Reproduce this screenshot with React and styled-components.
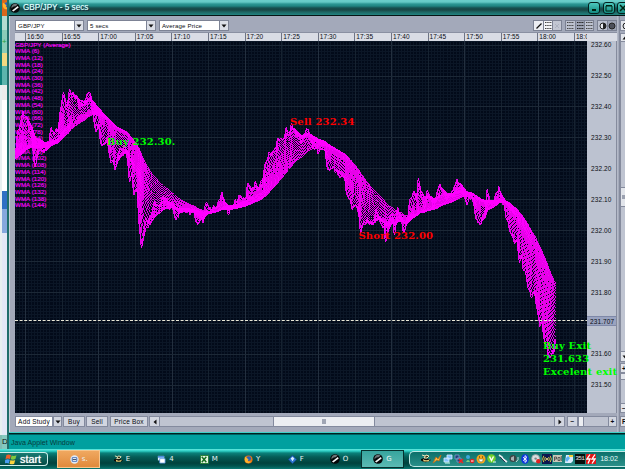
import React from 'react'
import styled, { createGlobalStyle } from 'styled-components'

const GlobalStyle = createGlobalStyle`
    *{
        box-sizing: border-box;
    }
    body{
        margin: 0;
        overflow: hidden;
        font-family: "Liberation Sans", Arial, sans-serif;
        font-size: 6.5px;
        color: #0a0c12;
    }
`

/* ---------- chart data ---------- */

const CHART_W = 572
const CHART_H = 372
const BAR = 0.611

// [x, y] of the traded price on the chart canvas
const PRICE = [
    [-90, 120], [-60, 112], [-30, 124], [-12, 116], [0, 112], [2, 92], [5, 82], [8, 68], [10, 80], [12, 76], [14, 94],
    [17, 98], [19, 132], [20, 126], [22, 108], [24, 98], [27, 114], [30, 108], [33, 102], [35, 87], [38, 92], [41, 90],
    [43, 86], [45, 70], [48, 48], [50, 66], [52, 67], [54, 47], [56, 53], [59, 55], [61, 57], [64, 67], [67, 64],
    [70, 60], [73, 48], [76, 62], [78, 77], [80, 92], [83, 83], [85, 100], [87, 107], [91, 97], [94, 112], [96, 127],
    [98, 114], [100, 137], [101, 120], [103, 110], [107, 107], [110, 105], [112, 118], [114, 145], [116, 128],
    [118, 155], [121, 145], [123, 172], [125, 200], [126, 213], [128, 192], [130, 177], [133, 182], [137, 168],
    [140, 160], [143, 168], [146, 158], [150, 156], [153, 167], [157, 163], [160, 182], [163, 170], [167, 168],
    [171, 170], [175, 172], [179, 170], [181, 186], [185, 176], [188, 180], [191, 158], [194, 171], [198, 167],
    [202, 165], [206, 151], [210, 169], [213, 172], [217, 163], [221, 160], [225, 154], [229, 161], [233, 141],
    [236, 151], [240, 140], [242, 151], [245, 143], [247, 138], [250, 122], [253, 114], [258, 111], [261, 103],
    [264, 96], [267, 100], [271, 88], [274, 94], [276, 82], [279, 90], [282, 96], [285, 102], [288, 96], [291, 86],
    [294, 94], [297, 106], [300, 108], [303, 111], [307, 106], [310, 113], [313, 133], [315, 126], [319, 128],
    [323, 134], [326, 136], [329, 134], [331, 156], [333, 153], [335, 164], [338, 167], [341, 163], [343, 173],
    [345, 191], [348, 181], [353, 180], [357, 186], [361, 168], [365, 184], [368, 184], [370, 202], [373, 184],
    [376, 168], [379, 196], [382, 164], [385, 178], [389, 193], [392, 174], [395, 158], [398, 150], [401, 158],
    [403, 136], [406, 158], [409, 168], [412, 148], [416, 163], [419, 165], [423, 144], [426, 147], [429, 153],
    [432, 159], [435, 150], [437, 153], [440, 140], [445, 143], [448, 153], [451, 164], [455, 153], [457, 156],
    [459, 170], [463, 184], [466, 180], [470, 169], [472, 146], [475, 167], [479, 158], [483, 145], [486, 159],
    [489, 167], [492, 181], [495, 191], [498, 199], [502, 202], [504, 224], [506, 213], [508, 229], [511, 234],
    [513, 249], [517, 255], [519, 249], [521, 264], [524, 284], [526, 280], [529, 300], [532, 310], [535, 319],
    [538, 305], [541, 298],
]

const PERIODS = Array.from({ length: 24 }, (_, i) => (i + 1) * 6)

const sampleBars = () => {
    const bars = []
    let k = 0
    for (let x = PRICE[0][0]; x <= 541; x += BAR) {
        while (k < PRICE.length - 2 && PRICE[k + 1][0] < x) k++
        const [x0, y0] = PRICE[k]
        const [x1, y1] = PRICE[k + 1]
        const i = bars.length
        const wiggle = Math.sin(i * 2.3) * 2.6 + Math.sin(i * 0.9 + 1) * 2.6 + Math.sin(i * 1.37) * 1.6
        bars.push({ x, y: y0 + ((y1 - y0) * (x - x0)) / (x1 - x0) + wiggle })
    }
    return bars
}

const wmaPath = (bars, period) => {
    let d = ''
    bars.forEach((bar, i) => {
        if (bar.x < 0 || i < period) return
        let sum = 0
        let weight = 0
        for (let j = 0; j < period; j++) {
            sum += bars[i - j].y * (period - j)
            weight += period - j
        }
        d += `${d ? 'L' : 'M'}${bar.x.toFixed(1)} ${(sum / weight).toFixed(1)}`
    })
    return d
}

const BARS = sampleBars()
const RIBBON = [3, ...PERIODS].map((p) => wmaPath(BARS, p))

const TIMES = ['16:50', '16:55', '17:00', '17:05', '17:10', '17:15', '17:20', '17:25', '17:30', '17:35', '17:40', '17:45', '17:50', '17:55', '18:00', '18:05']
const PRICES = ['232.60', '232.50', '232.40', '232.30', '232.20', '232.10', '232.00', '231.90', '231.80', '', '231.60', '231.50']

/* ---------- frame ---------- */

const Desktop = styled.div`
    width: 625px;
    height: 469px;
    display: grid;
    grid-template: 449px 20px / 7px 618px;
    overflow: hidden;
    background: #009c9c;
`
const Behind = styled.div`
    display: flex;
    flex-direction: column;
    overflow: hidden;
`
const Strip = styled.div`
    height: ${(p) => p.$h}px;
    flex: none;
    background: ${(p) => p.$bg};
    border-left: 2px solid ${(p) => p.$edge || '#e8f0f0'};
    overflow: hidden;
    font-size: 8px;
    line-height: ${(p) => p.$h}px;
`
const Plus = styled.span`
    color: #22a03a;
`
const AppWindow = styled.div`
    display: flex;
    flex-direction: column;
    border-left: 2px solid #1f6e6b;
    min-width: 0;
    overflow: hidden;
`
const TitleBar = styled.div`
    height: 16px;
    flex: none;
    display: flex;
    align-items: center;
    padding-left: 1px;
    gap: 3px;
    border-bottom: 1px solid #061414;
    background: linear-gradient(#6bcfca 0, #66cbc6 2px, #2c9793 4px, #208581 6px, #174f4e 8px, #184745 10px, #1e6562 12px, #218380 15px);
    overflow: hidden;
`
const Title = styled.span`
    flex: 1;
    font-size: 8.2px;
    color: #e3ffff;
    white-space: nowrap;
    text-shadow: 0 0 1px #7fdcdc, 1px 1px 0 #123;
`
const WinButton = styled.div`
    width: 12px;
    height: 12px;
    flex: none;
    margin-right: ${(p) => (p.$last ? -4 : -0.5)}px;
    display: flex;
    border: 1px solid #04201e;
    border-radius: 3px;
    background: linear-gradient(#4cc8bd, #138a80);
`
const Panel = styled.div`
    height: 416px;
    flex: none;
    display: grid;
    grid-template-columns: 602px 3px 11px;
    padding: 4px 0 4px 5px;
    background: #a3a9ba;
    border-left: 1px solid #c9ced9;
`
const Main = styled.div`
    display: flex;
    flex-direction: column;
    min-width: 0;
`
const Toolbar = styled.div`
    height: 11px;
    flex: none;
    display: flex;
    gap: 3px;
`
const Select = styled.div`
    width: ${(p) => p.$w}px;
    height: 11px;
    flex: none;
    display: flex;
    align-items: center;
    justify-content: space-between;
    padding-left: 2px;
    border: 1px solid #7d8395;
    background: #fff;
    font-size: 6.1px;
    letter-spacing: 0.15px;
    white-space: nowrap;
`
const Drop = styled.div`
    width: 9px;
    height: 9px;
    display: grid;
    place-items: center;
    border-left: 1px solid #7d8395;
    background: #dcdfe7;
`
const Spacer = styled.div`
    flex: 1;
`
const ToolGroup = styled.div`
    display: flex;
    height: 11px;
    border: 1px solid #7b8193;
`
const Tool = styled.div`
    width: 9px;
    height: 9px;
    display: grid;
    place-items: center;
    background: ${(p) => p.$bg || '#bcc1cf'};
    & + &{
        border-left: 1px solid #7b8193;
    }
`
const TimeRow = styled.div`
    height: 9px;
    flex: none;
    margin-top: 1px;
    display: flex;
    background: #d9dce5;
    border-top: 1px solid #8a90a2;
`
const TimeScale = styled.div`
    width: ${CHART_W}px;
    display: flex;
    padding-left: 10px;
    overflow: hidden;
`
const Tick = styled.div`
    width: 36.6px;
    flex: none;
    padding-left: 1px;
    border-left: 1px solid #6e7486;
    line-height: 8px;
    letter-spacing: 0.1px;
`
const ChartRow = styled.div`
    height: ${CHART_H}px;
    flex: none;
    display: flex;
`
const Plot = styled.div`
    width: ${CHART_W}px;
    position: relative;
    background: #020a19;
`
const Canvas = styled.svg`
    display: block;
`
const Legend = styled.div`
    position: absolute;
    left: 0;
    top: 0.5px;
    color: #ff00ff;
    font-size: 6.2px;
    line-height: 6.71px;
    letter-spacing: 0.05px;
    -webkit-text-stroke: 0.15px #ff00ff;
    white-space: nowrap;
`
const Note = styled.div`
    position: absolute;
    left: ${(p) => p.$x}px;
    top: ${(p) => p.$y}px;
    z-index: 2;
    color: ${(p) => p.$color};
    font: bold 10px/13px "DejaVu Serif", serif;
    letter-spacing: ${(p) => p.$ls || 0}px;
    white-space: nowrap;
`
const PriceAxis = styled.div`
    width: 30px;
    position: relative;
    background: #bcc2d0;
    border-right: 1px solid #858b9d;
`
const PriceTick = styled.div`
    height: 30.95px;
    padding-left: 4px;
    line-height: 8px;
    letter-spacing: 0.1px;
`
const LastPrice = styled.div`
    position: absolute;
    left: 0;
    top: 275px;
    width: 29px;
    height: 10px;
    padding-left: 3px;
    background: #99a3c0;
    border: solid #7e88a8;
    border-width: 1px 0;
    line-height: 9px;
    letter-spacing: 0.1px;
`
const BottomBar = styled.div`
    height: 11px;
    margin-top: 3px;
    display: flex;
`
const Push = styled.div`
    width: ${(p) => p.$w}px;
    height: 11px;
    flex: none;
    margin-right: ${(p) => p.$gap || 0}px;
    display: flex;
    align-items: center;
    justify-content: center;
    border: 1px solid #838a9e;
    background: ${(p) => p.$bg || '#d2d6e0'};
    letter-spacing: 0.2px;
    white-space: nowrap;
`
const Track = styled.div`
    width: ${(p) => p.$w}px;
    height: 11px;
    flex: none;
    display: flex;
    padding-left: ${(p) => p.$pad || 0}px;
    border: solid #838a9e;
    border-width: 1px 0;
    background: #bfc4d1;
`
const Thumb = styled.div`
    width: ${(p) => p.$w}px;
    height: 9px;
    display: grid;
    place-items: center;
    border: solid #838a9e;
    border-width: 0 1px;
    background: #eceef2;
`
const Divider = styled.div`
    margin: -4px 0;
    border-left: 1px solid #b5bac8;
    border-right: 1px solid #858b9d;
`
const SideColumn = styled.div`
    display: flex;
    flex-direction: column;
`
const SideCell = styled.div`
    height: ${(p) => p.$h}px;
    flex: none;
    margin-bottom: ${(p) => p.$gap || 0}px;
    padding-left: 1px;
    display: flex;
    align-items: center;
    border: solid #858b9d;
    border-width: ${(p) => (p.$plain ? 0 : '1px')} 0 ${(p) => (p.$plain ? 0 : '1px')} 1px;
    background: ${(p) => p.$bg || '#e2e5eb'};
`
const StatusBar = styled.div`
    flex: 1;
    margin-left: -1px;
    padding: 3px 0 0 3px;
    border-top: 1px solid #42cfc8;
    background: linear-gradient(#001f1f 0, #001f1f 1px, #00a09f 2px);
    color: #063c3c;
    font-size: 7.1px;
    line-height: 14px;
`

/* ---------- taskbar ---------- */

const TaskBar = styled.div`
    grid-column: 1 / 3;
    display: flex;
    align-items: stretch;
    background: linear-gradient(#63e9df 0, #2ecfc5 2px, #0a817a 4px, #055c56 8px, #00423d 14px, #00544e 17px, #0b7a74 20px);
    color: #e9f5f4;
`
const Start = styled.div`
    width: 48px;
    margin: 3px 9px 3px 0;
    display: flex;
    align-items: center;
    gap: 3px;
    padding-left: 5px;
    border: 1px solid #cceeea;
    border-left: 0;
    border-radius: 0 4px 4px 0;
    background: linear-gradient(#177a72, #044a45);
    font: 10.8px "Liberation Sans", Arial, sans-serif;
    color: #fff;
    text-shadow: 0 0 1px #fff;
`
const Task = styled.div`
    width: 43.4px;
    flex: none;
    display: flex;
    align-items: center;
    justify-content: center;
    gap: 3px;
    margin: 1px 0 1px;
    font: 7px "DejaVu Sans", sans-serif;
    background: ${(p) => p.$bg || 'transparent'};
    border: 1px solid ${(p) => p.$edge || 'transparent'};
`
const Tray = styled.div`
    flex: 1;
    margin: 2px 0 2px 5px;
    padding-left: 11px;
    display: flex;
    align-items: center;
    gap: 1px;
    border: 1px solid #bfe9e5;
    border-right: 0;
    border-radius: 5px 0 0 5px;
    background: linear-gradient(#0c706a, #2a8f89);
`
const Clock = styled.span`
    margin-left: 3px;
    font-size: 7.1px;
    color: #e4fbf9;
`

/* ---------- icons ---------- */

const Arrow = ({ dir = 'down' }) => (
    <svg width="6" height="6" viewBox="0 0 6 6">
        <path fill="#111" transform={`rotate(${{ down: 0, left: 90, up: 180, right: 270 }[dir]} 3 3)`} d="M.5 1.5h5L3 4.5z" />
    </svg>
)

const Ball = ({ size = 10 }) => (
    <svg width={size} height={size} viewBox="0 0 10 10">
        <circle cx="5" cy="5" r="4.8" fill="#050708" />
        <path d="M1.5 5.5Q3 2.8 5.6 3.2L7.6 1.4Q5 .2 2.8 1.6 1 3 1.5 5.5z" fill="#6d7477" />
        <path d="M2 7.5L7.8 3l.9 1.4L3.4 8.6z" fill="#f2f6f6" />
    </svg>
)

const Lines = ({ color = '#444' }) => (
    <svg width="7" height="7" viewBox="0 0 7 7" stroke={color} strokeDasharray="1.5 .7">
        <path d="M0 .5h7M0 3.5h7M0 6.5h7" />
    </svg>
)

const ICONS = {
    page: <><circle cx="5" cy="5" r="4.6" fill="#dfe9f5" /><path d="M2.5 3h5v4h-5z" fill="#fff" stroke="#3b64b0" strokeWidth="1" /><path d="M3 5h4" stroke="#345" /></>,
    hat: <><path d="M0 6.5Q5 10 10 6L8 5 3 4 0 5z" fill="#0a0a06" /><path d="M2 5Q5 7.5 9 5L7.5 7.5h-5z" fill="#e3cf78" /><path d="M1 1l3 1M5 1l3 1-2 2H3z" stroke="#efe8bb" fill="#3a3312" /></>,
    windows: <><path d="M1 1h7v5H1z" fill="#e8f3ff" /><path d="M1 1h7v2H1z" fill="#4a8de0" /><path d="M3 4h6v5H3z" fill="#fff" stroke="#4a8de0" strokeWidth=".8" /></>,
    excel: <><path d="M.5.5h9v9h-9z" fill="#e7f5e2" stroke="#1f7a2a" /><path d="M2 2l5 6M7 2L2 8" stroke="#187024" strokeWidth="1.7" /></>,
    fox: <><circle cx="5" cy="5" r="4.5" fill="#e87512" /><circle cx="5.2" cy="4" r="2.7" fill="#2f62b5" /><path d="M1 2l2 1 2 2-1 2 4 .5L5 9.3Q0 9 1 2z" fill="#ffb52e" /></>,
    gem: <><path d="M5 .3L9.7 5 5 9.7.3 5z" fill="#2d77cf" stroke="#0e3b86" strokeWidth=".6" /><path d="M5 2l2 2-2 3-2-3z" fill="#d8ecff" /></>,
    plug: <><path d="M1 9l3-6 2 2 3-4-2 6-2-1z" fill="#ffc04a" stroke="#c16d12" strokeWidth=".8" /></>,
    net: <><path d="M4 1h5v4H4zM1 4h5v4H1z" fill="#7fc4ff" stroke="#dcecff" strokeWidth=".8" /><path d="M2 9h5" stroke="#cfe" /></>,
    netoff: <><path d="M1 1h4v4H1zM3 4h4v4H3z" fill="#24427c" stroke="#8aa6d6" strokeWidth=".7" /><path d="M5 5l4 4M9 5L5 9" stroke="#f02020" strokeWidth="1.5" /></>,
    people: <><circle cx="3" cy="3" r="2" fill="#3da7dd" /><path d="M1 8q2-4 4 0z" fill="#7fd07a" /><circle cx="7.2" cy="7" r="2.3" fill="#e12020" /><path d="M6 7h2.5" stroke="#fff" /></>,
    smile: <><circle cx="5" cy="5" r="4.5" fill="#f6a71c" /><path d="M2.5 5h5Q7 8 5 8T2.5 5z" fill="#fff" stroke="#762" strokeWidth=".6" /><path d="M3 3h1M6 3h1" stroke="#221" /></>,
    vee: <><circle cx="4.5" cy="4.5" r="4.2" fill="#6fd02b" /><path d="M2.5 2.5l2 4 2-4" stroke="#fff" strokeWidth="1.4" fill="none" /><path d="M6 8h3" stroke="#dfe" /></>,
    wrench: <><path d="M1 1l3 2 1 2 4 3" stroke="#e8eef3" strokeWidth="1.6" fill="none" /><path d="M2 3l5 5" stroke="#29384c" /></>,
    speaker: <><circle cx="4" cy="4.6" r="3.5" fill="#3e4647" /><path d="M2 3.5l3-1.5v5L2 6z" fill="#a7b1b3" /><path d="M7 8Q10 6 9 3" stroke="#c6d6d6" fill="none" /></>,
    blue: <><ellipse cx="5" cy="5" rx="3.8" ry="4.8" fill="#0d35e0" /><path d="M3 3.2l4 3.4L5 8.4V1.6l2 1.8L3 6.7" stroke="#fff" strokeWidth=".9" fill="none" /></>,
    disc: <><circle cx="4.6" cy="4.6" r="4" fill="#d9dedf" stroke="#8d9799" strokeWidth=".7" /><circle cx="4.6" cy="4.6" r="1.2" fill="#788" /><circle cx="7.3" cy="7.2" r="2.2" fill="#e02222" /></>,
    radio: <><path d="M0 0h10v10H0z" fill="#0b1650" /><path d="M3.4 3Q2 5 3.4 7M6.6 3Q8 5 6.6 7M1.8 1.8Q-.5 5 1.8 8.2M8.2 1.8Q10.5 5 8.2 8.2" stroke="#e8dc40" fill="none" strokeWidth=".9" /><circle cx="5" cy="5" r="1" fill="#fff38a" /></>,
    grey: <><path d="M0 1h9v7H0z" fill="#c9c7b8" /><path d="M1.5 3v4M1.5 3h2v2h-2M5 3.5h2v3H5zM8.3 2v5" stroke="#444" strokeWidth=".8" fill="none" /></>,
    note: <><path d="M2 1h7v6l-2 2H1z" fill="#d9ecff" /><path d="M1 5l3-3 2 2-3 4z" fill="#5db1f2" /><path d="M5 1h4v2H5z" fill="#f6d13a" /></>,
    red: <><path d="M0 0h10v10H0z" fill="#e01414" /><path d="M4 .5L1 5h3L2 9.5M9 .5L6 5h3L6 9.5" stroke="#fff" strokeWidth="1.3" fill="none" /></>,
}

const Icon = ({ name, size = 9 }) => (
    <svg width={size} height={size} viewBox="0 0 10 10">{ICONS[name]}</svg>
)

const Digits = styled.span`
    width: 10px;
    height: 10px;
    overflow: hidden;
    background: #07100d;
    color: #e9eee9;
    font: 6px/10px "Liberation Mono", monospace;
    letter-spacing: -0.5px;
`

const Flag = () => (
    <svg width="12" height="11" viewBox="0 0 12 11">
        <path d="M1.5 1Q4 0 6 1.2L5 5Q3 4 .5 5z" fill="#f0602a" />
        <path d="M6.6 1.5Q9 2.6 11.5 1.2L10.4 5Q8 6.2 5.7 5.2z" fill="#7fc83d" />
        <path d="M.3 5.7Q3 4.7 4.8 5.8L3.8 9.6Q2 8.6-.7 9.6z" fill="#4a9df0" />
        <path d="M5.5 6Q8 7.2 10.2 5.9L9.2 9.7Q7 10.9 4.5 9.8z" fill="#fbd23c" />
    </svg>
)

/* ---------- parts ---------- */

const range = (n) => Array.from({ length: n }, (_, i) => i)

const Grid = () => (
    <g shapeRendering="crispEdges">
        {range(188).map((i) => <path key={i} d={`M${(10.5 + (i - 3) * 3.054).toFixed(1)} 0V${CHART_H}`} stroke="#0b1626" />)}
        {range(121).map((i) => <path key={i} d={`M0 ${(4 + (i - 1) * 3.095).toFixed(1)}H${CHART_W}`} stroke="#0b1626" />)}
        {range(16).map((i) => <path key={i} d={`M${(10.5 + i * 36.62).toFixed(1)} 0V${CHART_H}`} stroke={i % 2 ? '#162230' : '#232f3e'} />)}
        {range(12).map((i) => <path key={i} d={`M0 ${(4 + i * 30.95).toFixed(1)}H${CHART_W}`} stroke="#1c2836" />)}
    </g>
)

const Chart = () => (
    <Plot>
        <Canvas width={CHART_W} height={CHART_H} viewBox={`0 0 ${CHART_W} ${CHART_H}`}>
            <Grid />
            <g fill="none" stroke="#ff00ff" strokeWidth="0.9" shapeRendering="crispEdges">
                {RIBBON.map((d, i) => <path key={i} d={d} />)}
            </g>
            <path d={`M0 279.5H${CHART_W}`} stroke="#e9e7d6" strokeDasharray="3 1.6" />
        </Canvas>
        <Legend>
            <div>GBP/JPY (Average)</div>
            {PERIODS.map((p) => <div key={p}>WMA ({p})</div>)}
        </Legend>
        <Note $x={92} $y={94} $color="#00ff00" $ls={0.15}>Buy 232.30.</Note>
        <Note $x={275} $y={74} $color="#ff0000" $ls={0.15}>Sell 232.34</Note>
        <Note $x={343.5} $y={188} $color="#ff0000" $ls={0.15}>Short 232.00</Note>
        <Note $x={528} $y={298} $color="#00ff00" $ls={0.15}>
            Buy Exit<br />231.633<br />Excelent exit
        </Note>
    </Plot>
)

const SideScroll = () => (
    <SideColumn>
        <SideCell $h={11} $gap={2}>
            <svg width="7" height="8" viewBox="0 0 7 8"><circle cx="4" cy="4" r="3" fill="none" stroke="#222" /></svg>
        </SideCell>
        <SideCell $h={9}><Arrow dir="up" /></SideCell>
        <SideCell $h={145} $plain $bg="#bfc4d1" />
        <SideCell $h={20}>
            <svg width="6" height="4"><path d="M0 0h6v4H0z" fill="#9ba1b0" /></svg>
        </SideCell>
        <SideCell $h={144} $plain $bg="#bfc4d1" />
        <SideCell $h={11} $gap={1}><Arrow /></SideCell>
        <SideCell $h={10}><b>+</b></SideCell>
        <SideCell $h={7} />
        <SideCell $h={23} $plain $bg="#bfc4d1" />
        <SideCell $h={10} $gap={3}><b>−</b></SideCell>
        <SideCell $h={11}><b>F</b></SideCell>
    </SideColumn>
)

const TASKS = [
    { icon: 'page', text: 's.', bg: 'linear-gradient(#f0a860, #e08a3c)', edge: '#f7c58c' },
    { icon: 'hat', text: 'E' },
    { icon: 'windows', text: '4' },
    { icon: 'excel', text: 'M' },
    { icon: 'fox', text: 'Y' },
    { icon: 'gem', text: 'F' },
    { text: 'O' },
    { text: 'G', bg: 'linear-gradient(#37a59e, #5bbab3)', edge: '#06302d' },
]

const TRAY = ['hat', 'plug', 'net', 'netoff', 'people', 'smile', 'vee', 'wrench', 'speaker', 'blue', 'disc', 'radio', 'grey', 'note']

const App = () => {
    return (
        <>
            <GlobalStyle />
            <Desktop>
                <Behind>
                    <Strip $h={16} $bg="#d9671c" $edge="#187a77"><Icon name="fox" /></Strip>
                    <Strip $h={14} $bg="#b2dcd2" $edge="#0e7f7a" />
                    <Strip $h={23} $bg="#8accb8" $edge="#0e7f7a"><Plus>+</Plus></Strip>
                    <Strip $h={13} $bg="#f2d982" $edge="#0e7f7a" />
                    <Strip $h={19} $bg="#5cb5ad" $edge="#0e7f7a" />
                    <Strip $h={15} $bg="#ececec" />
                    <Strip $h={91} $bg="#fff" />
                    <Strip $h={18} $bg="#2f6fc4" />
                    <Strip $h={24} $bg="#86a8dd" />
                    <Strip $h={202} $bg="#e3e8f6" />
                    <Strip $h={14} $bg="#86c9bf" $edge="#7fbdb4">D</Strip>
                </Behind>
                <AppWindow>
                    <TitleBar>
                        <Ball />
                        <Title>GBP/JPY - 5 secs</Title>
                        <WinButton><svg width="10" height="10"><path d="M3 7h4" stroke="#021" strokeWidth="2" /></svg></WinButton>
                        <WinButton><svg width="10" height="10"><path d="M2 3h6v5H2zM2 2.5h6" stroke="#021" fill="none" /></svg></WinButton>
                        <WinButton $last><svg width="10" height="10"><path d="M2 2l6 6M8 2L2 8" stroke="#021" strokeWidth="1.5" /></svg></WinButton>
                    </TitleBar>
                    <Panel>
                        <Main>
                            <Toolbar>
                                <Select $w={69}>GBP/JPY<Drop><Arrow /></Drop></Select>
                                <Select $w={69}>5 secs<Drop><Arrow /></Drop></Select>
                                <Select $w={70}>Average Price<Drop><Arrow /></Drop></Select>
                                <Spacer />
                                <ToolGroup>
                                    <Tool $bg="#eceef3"><svg width="8" height="8"><path d="M1.5 6.5l5-5" stroke="#111" strokeWidth="1.2" /></svg></Tool>
                                    <Tool $bg="#f4f5f8"><Lines /></Tool>
                                    <Tool $bg="#c3c7d3"><svg width="8" height="8"><path d="M2 6l4-4M2 2l4 4" stroke="#adb2c0" /></svg></Tool>
                                </ToolGroup>
                                <ToolGroup>
                                    <Tool><Lines /></Tool>
                                    <Tool $bg="#9da3b4"><Lines color="#222" /></Tool>
                                    <Tool><Lines /></Tool>
                                </ToolGroup>
                                <ToolGroup>
                                    <Tool><svg width="8" height="8"><circle cx="4" cy="4" r="3" fill="#e8eaf0" stroke="#222" /><path d="M4 1a3 3 0 010 6z" fill="#222" /></svg></Tool>
                                    <Tool $bg="#9da3b4"><svg width="8" height="8"><circle cx="4" cy="4" r="3" fill="#4d505a" stroke="#222" /></svg></Tool>
                                </ToolGroup>
                            </Toolbar>
                            <TimeRow>
                                <TimeScale>
                                    {TIMES.map((t) => <Tick key={t}>{t}</Tick>)}
                                </TimeScale>
                            </TimeRow>
                            <ChartRow>
                                <Chart />
                                <PriceAxis>
                                    {PRICES.map((p, i) => <PriceTick key={i}>{p}</PriceTick>)}
                                    <LastPrice>231.707</LastPrice>
                                </PriceAxis>
                            </ChartRow>
                            <BottomBar>
                                <Push $w={38} $bg="#fff">Add Study</Push>
                                <Push $w={9} $gap={1}><Arrow /></Push>
                                <Push $w={22} $gap={1}>Buy</Push>
                                <Push $w={22} $gap={2}>Sell</Push>
                                <Push $w={38} $gap={1}>Price Box</Push>
                                <Push $w={11}><Arrow dir="left" /></Push>
                                <Track $w={394} $pad={113}>
                                    <Thumb $w={102}><svg width="4" height="5"><path d="M0 0h4v5H0z" fill="#a0a6b4" /></svg></Thumb>
                                </Track>
                                <Push $w={11} $gap={2}><Arrow dir="right" /></Push>
                                <Push $w={11}><b>−</b></Push>
                                <Track $w={30}><Thumb $w={6} /></Track>
                                <Push $w={9}><b>+</b></Push>
                            </BottomBar>
                        </Main>
                        <Divider />
                        <SideScroll />
                    </Panel>
                    <StatusBar>Java Applet Window</StatusBar>
                </AppWindow>
                <TaskBar>
                    <Start><Flag />start</Start>
                    {TASKS.map((t) => (
                        <Task key={t.text} $bg={t.bg} $edge={t.edge}>
                            {t.icon ? <Icon name={t.icon} /> : <Ball size={10} />}
                            {t.text}
                        </Task>
                    ))}
                    <Tray>
                        {TRAY.map((name) => <Icon key={name} name={name} size={10} />)}
                        <Digits>351</Digits>
                        <Icon name="red" size={10} />
                        <Clock>18:02</Clock>
                    </Tray>
                </TaskBar>
            </Desktop>
        </>
    )
}

export default App
